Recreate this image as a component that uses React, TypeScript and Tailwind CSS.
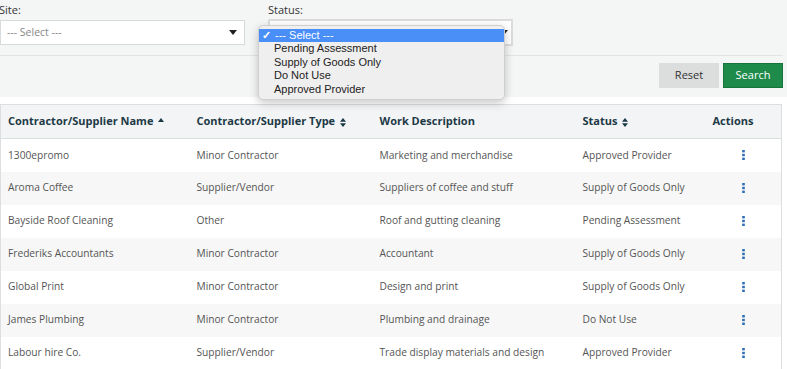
import { useState } from 'react'

type Row = {
  name: string
  type: string
  work: string
  status: string
}

const rows: Row[] = [
  { name: '1300epromo', type: 'Minor Contractor', work: 'Marketing and merchandise', status: 'Approved Provider' },
  { name: 'Aroma Coffee', type: 'Supplier/Vendor', work: 'Suppliers of coffee and stuff', status: 'Supply of Goods Only' },
  { name: 'Bayside Roof Cleaning', type: 'Other', work: 'Roof and gutting cleaning', status: 'Pending Assessment' },
  { name: 'Frederiks Accountants', type: 'Minor Contractor', work: 'Accountant', status: 'Supply of Goods Only' },
  { name: 'Global Print', type: 'Minor Contractor', work: 'Design and print', status: 'Supply of Goods Only' },
  { name: 'James Plumbing', type: 'Minor Contractor', work: 'Plumbing and drainage', status: 'Do Not Use' },
  { name: 'Labour hire Co.', type: 'Supplier/Vendor', work: 'Trade display materials and design', status: 'Approved Provider' },
]

const statusOptions = ['Pending Assessment', 'Supply of Goods Only', 'Do Not Use', 'Approved Provider']

function Caret() {
  return (
    <svg width="8" height="5" viewBox="0 0 8 5" className="shrink-0">
      <path d="M0 0 H8 L4 5 Z" fill="#222" />
    </svg>
  )
}

function SortBoth() {
  return (
    <svg width="6" height="9" viewBox="0 0 6 9" className="ml-[5px] inline-block">
      <path d="M0 3.8 L3 0 L6 3.8 Z M0 5.2 H6 L3 9 Z" fill="#1d3946" />
    </svg>
  )
}

function SortUp() {
  return (
    <svg width="6" height="4" viewBox="0 0 6 4" className="mb-[4px] ml-[5px] inline-block">
      <path d="M0 4 L3 0 L6 4 Z" fill="#1d3946" />
    </svg>
  )
}

function Dots() {
  return (
    <svg width="3" height="10" viewBox="0 0 3 10">
      <rect x="0.2" y="0" width="2.6" height="2.4" fill="#2c6db5" />
      <rect x="0.2" y="3.8" width="2.6" height="2.4" fill="#2c6db5" />
      <rect x="0.2" y="7.6" width="2.6" height="2.4" fill="#2c6db5" />
    </svg>
  )
}

export default function App() {
  const [open] = useState(true)

  return (
    <div
      className="relative h-[369px] w-[787px] overflow-hidden bg-white text-[11px] text-[#555]"
      style={{ fontFamily: '"Open Sans", sans-serif' }}
    >
      <div className="h-[97px] bg-[#f4f5f5] pr-[4px]">
        <div className="flex gap-[23px] border-b border-[#e2e4e4] pb-[9px] pt-[3px]">
          <div className="w-[245px]">
            <div className="-ml-[1px] mb-[3px] text-[11px] leading-[14px] text-[#333]">Site:</div>
            <div className="flex h-[25px] items-center justify-between border border-[#d9dbdb] bg-white pl-[6px] pr-[7px]">
              <span className="text-[10.5px] text-[#888]">--- Select ---</span>
              <Caret />
            </div>
          </div>
          <div className="w-[245px]">
            <div className="mb-[2px] text-[11px] leading-[14px] text-[#333]">Status:</div>
            <div className="flex h-[27px] items-center justify-between border-2 border-[#dcdcdc] bg-white pl-[6px] pr-[3px]">
              <span className={open ? 'invisible text-[10.5px]' : 'text-[10.5px] text-[#888]'}>--- Select ---</span>
              <Caret />
            </div>
          </div>
        </div>
        <div className="flex justify-end gap-[4px] pt-[7px]">
          <button className="h-[25px] w-[60px] bg-[#dcdddd] text-[11px] text-[#333]">Reset</button>
          <button className="h-[25px] w-[60px] border border-[#16753d] bg-[#1e8b4b] text-[11px] text-white">
            Search
          </button>
        </div>
      </div>

      <div className="pr-[5px] pt-[7px]">
        <table className="w-full table-fixed border-collapse border border-[#dcdfe0]">
          <thead>
            <tr className="h-[34px] border-b border-[#dcdfe0] bg-[#f3f4f5] text-left text-[11px] font-bold text-[#1d3946]">
              <th className="w-[190px] pl-[7px] font-bold">
                Contractor/Supplier Name
                <SortUp />
              </th>
              <th className="w-[183px] pl-[6px] font-bold">
                Contractor/Supplier Type
                <SortBoth />
              </th>
              <th className="w-[204px] pl-[6px] font-bold">Work Description</th>
              <th className="w-[125px] pl-[5px] font-bold">
                Status
                <SortBoth />
              </th>
              <th className="pl-[10px] text-left font-bold">Actions</th>
            </tr>
          </thead>
          <tbody className="text-[10.2px]">
            {rows.map((r, i) => (
              <tr key={r.name} className={i % 2 === 1 ? 'h-[33px] bg-[#f7f7f7]' : 'h-[33px] bg-white'}>
                <td className="pl-[7px]">{r.name}</td>
                <td className="pl-[6px]">{r.type}</td>
                <td className="pl-[6px]">{r.work}</td>
                <td className="pl-[5px]">{r.status}</td>
                <td className="pl-[39px]">
                  <div className="flex">
                    <Dots />
                  </div>
                </td>
              </tr>
            ))}
          </tbody>
        </table>
      </div>

      {open && (
        <div
          className="absolute left-[258px] top-[25px] w-[247px] rounded-[5px] border border-[#cfcfcf] bg-[#efefef] py-[3px] text-[11px] leading-[13.5px] text-[#222] shadow-[0_3px_10px_rgba(0,0,0,0.22)]"
          style={{ fontFamily: '"Liberation Sans", Arial, sans-serif' }}
        >
          <div className="flex h-[13px] items-center bg-[#4a8ef7] pl-[3px] text-white">
            <span className="w-[13px] text-[11px] font-bold leading-[13px]">✓</span>
            <span>--- Select ---</span>
          </div>
          {statusOptions.map((s) => (
            <div key={s} className="pl-[15px]">
              {s}
            </div>
          ))}
        </div>
      )}
    </div>
  )
}
